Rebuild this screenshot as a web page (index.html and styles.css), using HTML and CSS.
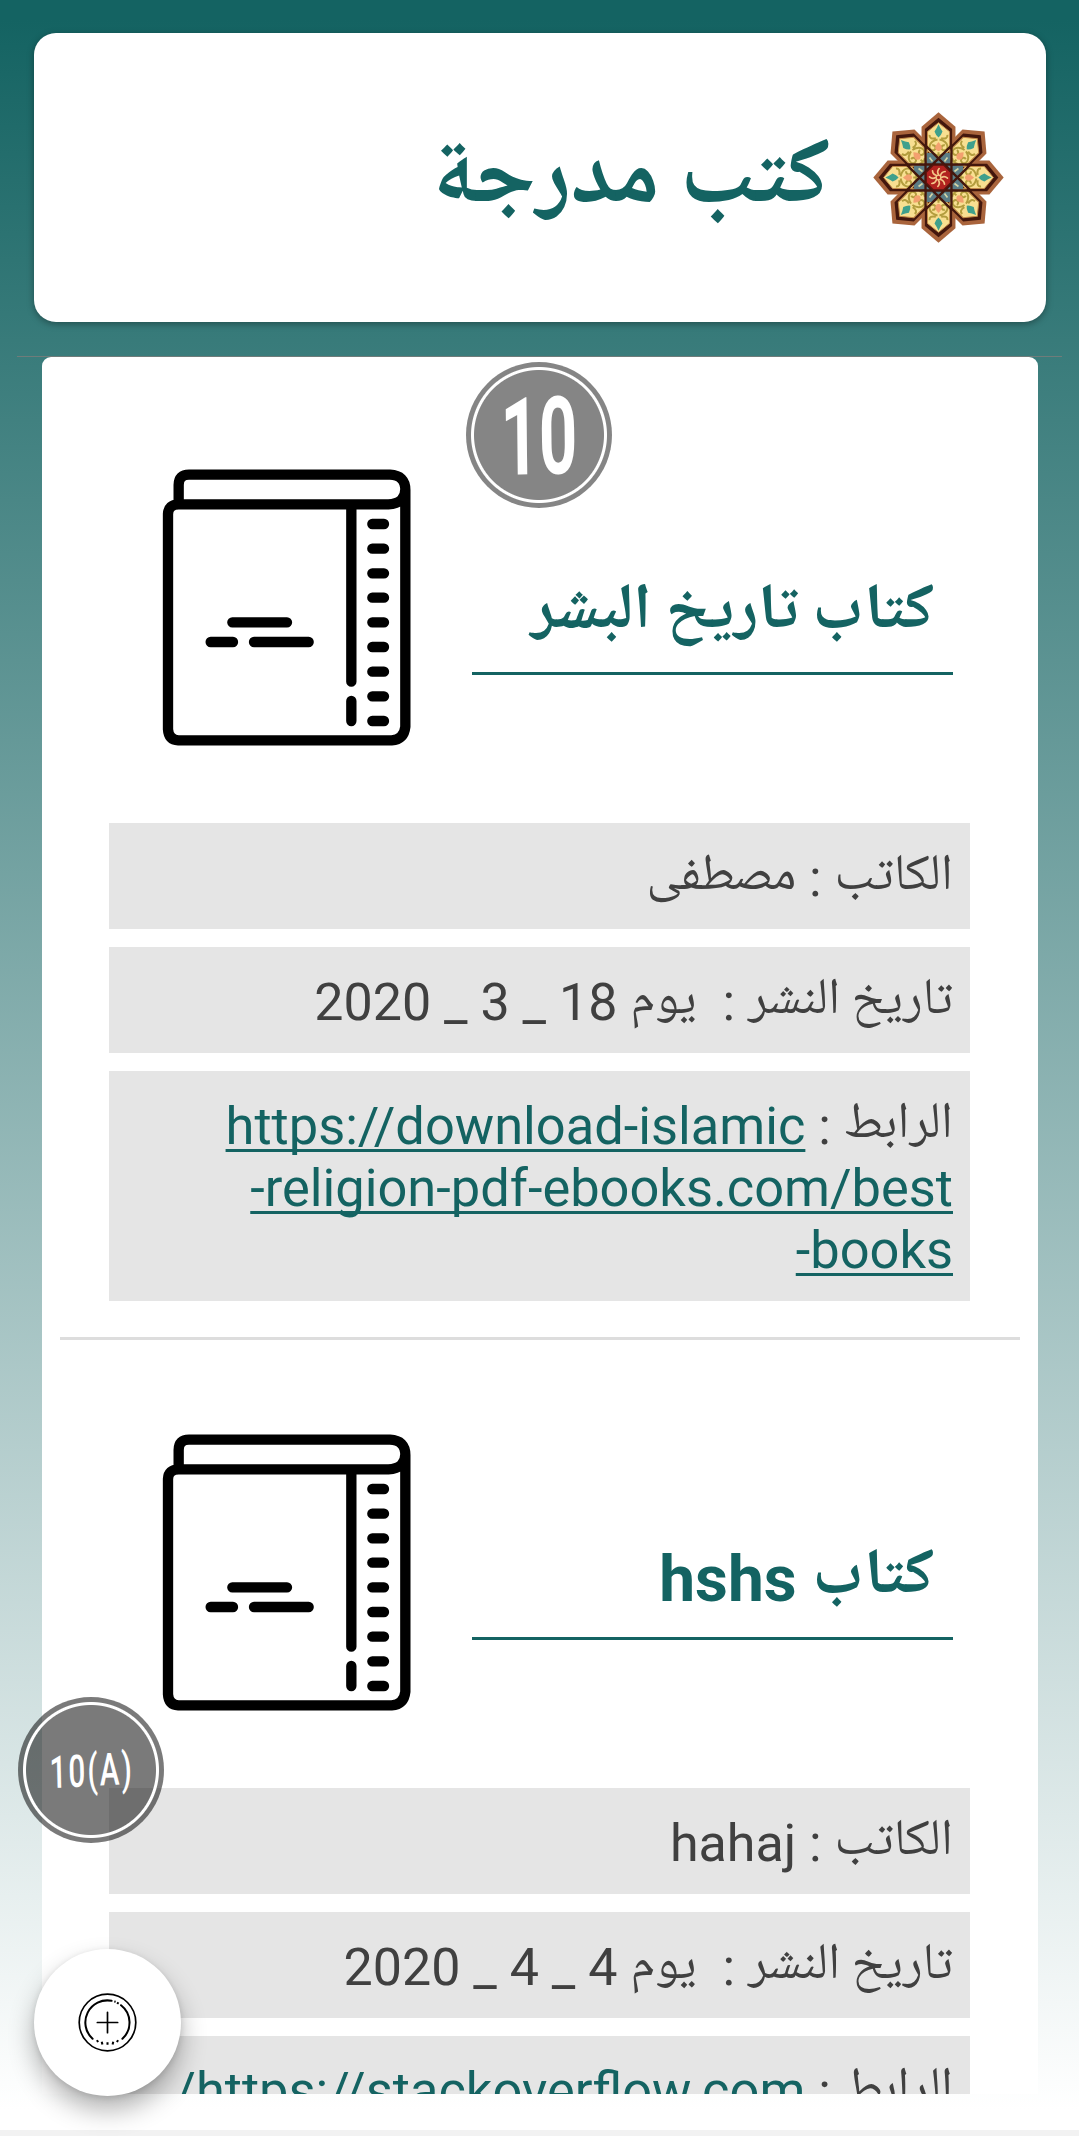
FILE: index.html
```html
<!DOCTYPE html>
<html lang="ar" dir="rtl">
<head>
<meta charset="utf-8">
<title>كتب مدرجة</title>
<link rel="stylesheet" href="styles.css">
</head>
<body>
<svg class="defs" width="0" height="0" aria-hidden="true">
  <defs>
    <g id="petal-rim"><path fill="#a9643c" d="M0-196 51-153V-60L0-10-51-60V-153Z"/></g>
    <g id="petal-edge"><path fill="#43170d" d="M0-180 41-146V-50L0-10-41-50V-146Z"/></g>
    <g id="petal-face">
      <path fill="#f8df91" stroke="#c38a48" stroke-width="3" d="M0-165 33-138V-80L0-55-33-80V-138Z"/>
      <g fill="none" stroke="#b39d3e" stroke-width="6">
        <path d="M-3-114C-32-108-32-82-18-82S-8-100-19-97M3-114C32-108 32-82 18-82S8-100 19-97M-8-118Q-28-114-27-128M8-118Q28-114 27-128M0-66V-76M-12-70Q0-62 12-70"/>
      </g>
      <path fill="#3fa08c" d="M0-160Q6-146 12-138 8-126 0-120-8-126-12-138-6-146 0-160Z"/>
      <path fill="#f3a06f" d="M0-107Q11-95 10-88 6-79 0-79T-10-88Q-11-95 0-107Z"/>
    </g>
    <g id="rim4">
      <use href="#petal-rim"/><use href="#petal-rim" transform="rotate(90)"/>
      <use href="#petal-rim" transform="rotate(180)"/><use href="#petal-rim" transform="rotate(270)"/>
    </g>
    <g id="edge4">
      <use href="#petal-edge"/><use href="#petal-edge" transform="rotate(90)"/>
      <use href="#petal-edge" transform="rotate(180)"/><use href="#petal-edge" transform="rotate(270)"/>
    </g>
    <g id="face4">
      <use href="#petal-face"/><use href="#petal-face" transform="rotate(90)"/>
      <use href="#petal-face" transform="rotate(180)"/><use href="#petal-face" transform="rotate(270)"/>
    </g>
  </defs>
  <symbol id="book" viewBox="0 0 960 990">
    <g fill="none" stroke="#000" stroke-width="31" stroke-linecap="round">
      <path stroke-linecap="butt" d="M176 195V135Q176 104 207 104H810Q856 106 856 150V860Q852 898 815 901H175Q146 899 144 868V222Q145 194 176 193H805Q856 190 856 148"/>
      <path d="M694 200V725M694 783V843M337 547H501M272 606H339M402 606H566"/>
      <path d="M757 252H792M757 326H792M757 400H792M757 473H792M757 547H792M757 621H792M757 695H792M757 769H792M757 843H792"/>
    </g>
  </symbol>
</svg>

<header class="banner">
  <svg class="logo" viewBox="-200 -200 400 400">
    <use href="#rim4"/><use href="#rim4" transform="rotate(45)"/>
    <use href="#edge4"/><use href="#edge4" transform="rotate(45)"/>
    <use href="#face4"/><use href="#face4" transform="rotate(45)"/>
    <path fill="#5b7d85" d="M-36-74H-12L0-60 12-74H36V-36H74V-12L60 0 74 12V36H36V74H12L0 60-12 74H-36V36H-74V12L-60 0-74-12V-36H-36Z"/>
    <path fill="none" stroke="#d5d6a6" stroke-width="5" d="M-27-60-18-48M27-60 18-48M-27 60-18 48M27 60 18 48M-60-27-48-18M-60 27-48 18M60-27 48-18M60 27 48 18"/>
    <path fill="none" stroke="#43170d" stroke-width="7" d="M-39-100V100M39-100V100M-100-39H100M-100 39H100M-98-41 41 98M-41-98 98 41M-98 41 41-98M-41 98 98-41"/>
    <path fill="#b0221f" stroke="#5c130d" stroke-width="4" d="M-16-37H16L37-16V16L16 37H-16L-37 16V-16Z"/>
    <path fill="none" stroke="#f4c588" stroke-width="5" stroke-linecap="round" d="M0-9Q-6-18 2-27M6-6Q9-17 20-18M9 0Q18-6 27 2M6 6Q17 9 18 20M0 9Q6 18-2 27M-6 6Q-9 17-20 18M-9 0Q-18 6-27-2M-6-6Q-17-9-18-20"/>
    <circle r="7" fill="none" stroke="#f4c588" stroke-width="4"/>
  </svg>
  <h1 class="banner-title ar">كتب مدرجة</h1>
</header>
<hr class="rule">

<main class="list">
  <article class="entry">
    <div class="entry-head">
      <h2 class="entry-title"><span class="ar">كتاب تاريخ البشر</span></h2>
      <svg class="book"><use href="#book"/></svg>
    </div>
    <p class="row"><span class="ar">الكاتب</span> : <span class="ar">مصطفى</span></p>
    <p class="row"><span class="ar">تاريخ النشر</span> :&nbsp; <span class="ar">يوم</span> 18 _ 3 _ 2020</p>
    <p class="row"><span class="ar">الرابط</span> : <a class="link" href="#">https://download-islamic<br><bdi dir="ltr">-religion-pdf-ebooks.com/best</bdi><br><bdi dir="ltr">-books</bdi></a></p>
  </article>
  <article class="entry">
    <div class="entry-head">
      <h2 class="entry-title"><span class="ar">كتاب</span> hshs</h2>
      <svg class="book"><use href="#book"/></svg>
    </div>
    <p class="row"><span class="ar">الكاتب</span> : hahaj</p>
    <p class="row"><span class="ar">تاريخ النشر</span> :&nbsp; <span class="ar">يوم</span> 4 _ 4 _ 2020</p>
    <p class="row"><span class="ar">الرابط</span> : <a class="link" href="#">https://stackoverflow.com/</a></p>
  </article>
</main>
<footer class="bottom-bar"></footer>

<div class="badge badge-count"><span class="badge-text">10</span></div>
<div class="badge badge-sub"><span class="badge-text badge-text-small">10(A)</span></div>
<button class="fab" aria-label="إضافة">
  <svg class="fab-icon" viewBox="-90 -90 180 180" fill="none" stroke="#000">
    <circle r="83.500" stroke-width="5"/>
    <path stroke-width="6" stroke-linecap="round" d="M12-64A65 65 0 0 0-44 48M44 48A65 65 0 0 0 40-51"/>
    <path stroke-width="6" d="M20-62 24-61M28-59 33-56"/>
    <path stroke-width="6" d="M-31 52-28 58M-17 57-15 65M0 58V66M17 57 15 65M31 52 28 58"/>
    <path stroke-width="5" stroke-linecap="round" d="M-30 0H30M0-30V30"/>
  </svg>
</button>
</body>
</html>
```
FILE: styles.css
```css
* { box-sizing: border-box; }
html { background: #f2f2f2; }
body {
  margin: 0;
  width: 1079px;
  height: 2136px;
  overflow: hidden;
  position: relative;
  display: flex;
  flex-direction: column;
  background: linear-gradient(#146362 0, #146362 20px, #fff 2110px);
  font-family: Roboto, "Noto Naskh Arabic", "DejaVu Sans", sans-serif;
  color: #404040;
}
h1, h2, p { margin: 0; }
.defs { position: absolute; }
.ar { font-family: "Noto Naskh Arabic", "Noto Naskh Arabic UI", "DejaVu Sans", sans-serif; }

.banner {
  margin: 33px 33px 0 34px;
  height: 289px;
  flex: none;
  border-radius: 22px;
  background: #fff;
  box-shadow: 0 2px 7px rgba(0, 0, 0, .35);
  display: flex;
  align-items: center;
  padding-right: 41px;
}
.logo { width: 133px; height: 133px; }
.banner-title { margin-right: 42px; padding-top: 9px; font-size: 92.600px; line-height: 100px; color: #146362; }
.rule { margin: 34px 17px 0; height: 1px; border: 0; background: #6f7c7a; flex: none; }

.list {
  margin: 0 41px 0 42px;
  height: 1737px;
  flex: none;
  overflow: hidden;
  background: #fff;
  border-radius: 9px 9px 0 0;
  padding: 0 18px;
}
.entry {
  height: 983px;
  padding: 83px 50px 0 49px;
  border-bottom: 3px solid #ddd;
}
.entry + .entry { padding-top: 65px; height: 965px; }
.entry-head {
  height: 383px;
  padding-right: 17px;
  display: flex;
  justify-content: space-between;
}
.entry-title {
  width: 481px;
  height: 235px;
  padding: 135px 19px 0 0;
  border-bottom: 3px solid #146362;
  font-size: 64px;
  line-height: 80px;
  color: #146362;
  white-space: nowrap;
}
.entry-title .ar { line-height: 0; vertical-align: 8px; }
.book { width: 320px; height: 330px; margin-left: 11px; }
.row {
  margin-bottom: 18px;
  padding: 25px 17px 19px;
  background: #e5e5e5;
  font-size: 52px;
  line-height: 62px;
  white-space: nowrap;
}
.row .ar { font-size: 51px; line-height: 0; vertical-align: 7px; }
.link {
  color: #146362;
  font-size: 52.4px;
  line-height: 0;
  text-decoration-thickness: 3px;
  text-underline-offset: 4.5px;
  text-decoration-skip-ink: none;
}
.bottom-bar { margin-top: auto; height: 6px; background: #f2f2f2; flex: none; }

.badge {
  position: absolute;
  width: 146px;
  height: 146px;
  border-radius: 50%;
  background: radial-gradient(circle, rgba(0,0,0,.48) 64.500px, #fff 65.500px, #fff 67.500px, rgba(0,0,0,.48) 68.500px);
  display: flex;
  align-items: center;
  justify-content: center;
  color: #fff;
  direction: ltr;
}
.badge-count { left: 466px; top: 362px; }
.badge-sub { left: 18px; top: 1697px; background: radial-gradient(circle, rgba(0,0,0,.52) 64.500px, #fff 65.500px, #fff 67.500px, rgba(0,0,0,.52) 68.500px); }
.badge-text { font-size: 108px; font-weight: 700; transform: translateY(2px) scaleX(.62) rotate(-1deg); }
.badge-text-small { font-size: 45px; font-weight: 500; letter-spacing: 3px; transform: translateX(1px) scaleX(.66) rotate(-2deg); }
.fab {
  position: absolute;
  left: 34px;
  top: 1949px;
  width: 147px;
  height: 147px;
  border: 0;
  border-radius: 50%;
  background: #fff;
  box-shadow: 0 14px 26px rgba(0, 0, 0, .3), 0 2px 6px rgba(0, 0, 0, .12);
  display: flex;
  align-items: center;
  justify-content: center;
  padding: 0;
}
.fab-icon { width: 61px; height: 61px; }
```
